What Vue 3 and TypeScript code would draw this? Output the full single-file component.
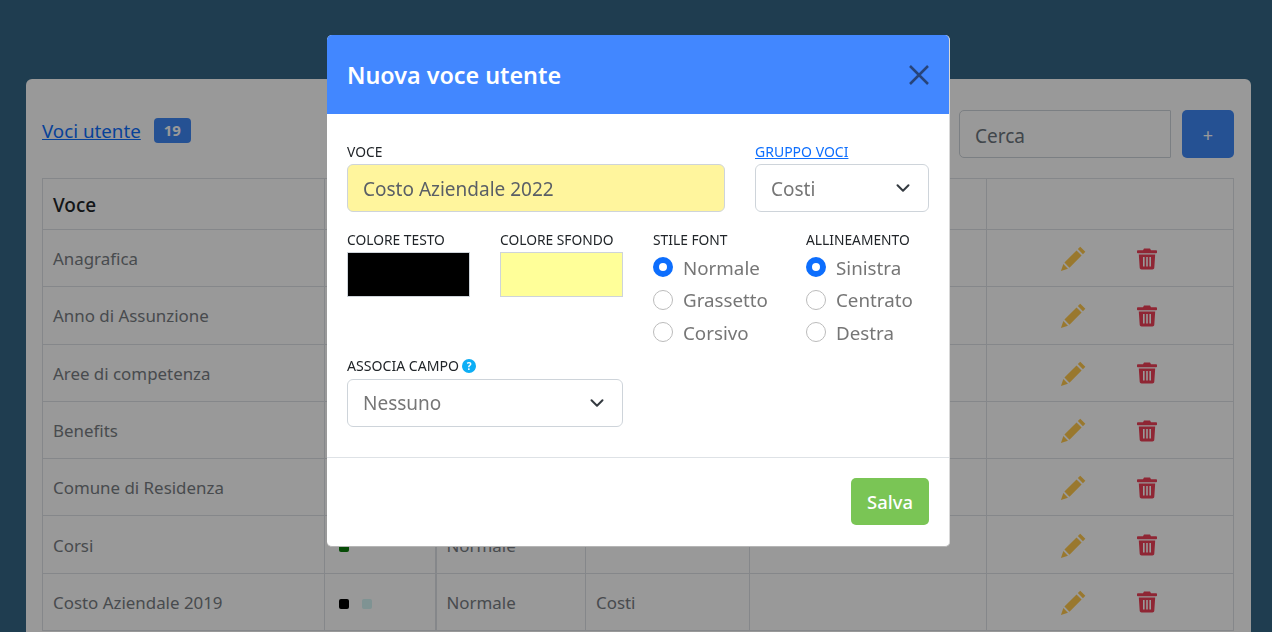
<script setup lang="ts">
interface Row { name: string; c1: string; c2: string; style: string; group: string }
const rows: Row[] = [
  { name: 'Anagrafica', c1: '#000000', c2: '#ffffff', style: '', group: '' },
  { name: 'Anno di Assunzione', c1: '#000000', c2: '#ffffff', style: '', group: '' },
  { name: 'Aree di competenza', c1: '#000000', c2: '#ffffff', style: '', group: '' },
  { name: 'Benefits', c1: '#000000', c2: '#ffffff', style: '', group: '' },
  { name: 'Comune di Residenza', c1: '#000000', c2: '#ffffff', style: '', group: '' },
  { name: 'Corsi', c1: '#0a7d0a', c2: '#ffffff', style: 'Normale', group: '' },
  { name: 'Costo Aziendale 2019', c1: '#000000', c2: '#d4f5f5', style: 'Normale', group: 'Costi' },
]
const stili = ['Normale', 'Grassetto', 'Corsivo']
const allineamenti = ['Sinistra', 'Centrato', 'Destra']
</script>

<template>
  <div class="page">
    <section class="card">
      <div class="toolbar">
        <a class="title-link" href="#">Voci utente</a>
        <span class="badge">19</span>
        <div class="spacer"></div>
        <input class="search" placeholder="Cerca" />
        <button class="add">+</button>
      </div>
      <table class="grid">
        <colgroup>
          <col style="width: 282px" /><col style="width: 111px" /><col style="width: 150px" />
          <col style="width: 164px" /><col style="width: 237px" /><col style="width: 247px" />
        </colgroup>
        <thead>
          <tr><th>Voce</th><th></th><th></th><th></th><th></th><th></th></tr>
        </thead>
        <tbody>
          <tr v-for="r in rows" :key="r.name">
            <td>{{ r.name }}</td>
            <td class="swatches">
              <span class="sw" :style="{ background: r.c1 }"></span>
              <span class="sw" :style="{ background: r.c2 }"></span>
            </td>
            <td class="thick">{{ r.style }}</td>
            <td>{{ r.group }}</td>
            <td></td>
            <td>
              <div class="actions">
                <svg class="ico" width="29" height="29" viewBox="0 0 24 24" fill="#ffc94d">
                  <path d="M17.600 2.200l4.200 4.200-2 2-4.200-4.200zM14.500 5.300l4.200 4.200L8.700 19.600l-4.200-4.200zM3.600 16.600l3.800 3.800L1.600 22.400z" />
                </svg>
                <svg class="ico" width="24" height="24" viewBox="0 0 24 24" fill="#ef4058">
                  <path fill-rule="evenodd" d="M9 1.600h6l1 1.600h5.200c.5 0 .8.4.8.8v1.400c0 .4-.3.8-.8.8H2.800c-.5 0-.8-.4-.8-.8V4c0-.4.3-.8.8-.8H8zM3.800 7.400h16.400l-.9 13.400c-.1 1-.9 1.700-1.900 1.700H6.600c-1 0-1.800-.7-1.900-1.700zM8 10v9.400h1.600V10zm3.200 0v9.400h1.600V10zm3.200 0v9.400H16V10z" />
                </svg>
              </div>
            </td>
          </tr>
        </tbody>
      </table>
    </section>
  </div>

  <div class="scrim"></div>

  <div class="modal">
    <header class="m-head">
      <h2>Nuova voce utente</h2>
      <svg class="close" width="20" height="20" viewBox="0 0 20 20" fill="none" stroke="#27447a" stroke-width="2.500">
        <path d="M1 1l18 18M19 1L1 19" />
      </svg>
    </header>
    <div class="m-body">
      <div class="row-voce">
        <div class="field">
          <label>VOCE</label>
          <input class="ctl filled" value="Costo Aziendale 2022" />
        </div>
        <div class="field">
          <a class="lab-link" href="#">GRUPPO VOCI</a>
          <div class="ctl select">
            <span>Costi</span>
            <svg width="16" height="16" viewBox="0 0 16 16" fill="none" stroke="#343a40" stroke-width="2" stroke-linecap="round" stroke-linejoin="round"><path d="M2.500 5.200L8 10.700l5.500-5.500" /></svg>
          </div>
        </div>
      </div>
      <div class="row-four">
        <div class="field">
          <label>COLORE TESTO</label>
          <div class="color" style="background: #000000"></div>
        </div>
        <div class="field">
          <label>COLORE SFONDO</label>
          <div class="color" style="background: #ffff99"></div>
        </div>
        <div class="field">
          <label>STILE FONT</label>
          <div class="radios">
            <div v-for="(s, i) in stili" :key="s" class="radio">
              <span class="dot" :class="{ on: i === 0 }"></span><span>{{ s }}</span>
            </div>
          </div>
        </div>
        <div class="field">
          <label>ALLINEAMENTO</label>
          <div class="radios">
            <div v-for="(s, i) in allineamenti" :key="s" class="radio">
              <span class="dot" :class="{ on: i === 0 }"></span><span>{{ s }}</span>
            </div>
          </div>
        </div>
      </div>
      <div class="row-assoc">
        <div class="field">
          <div class="with-help"><label>ASSOCIA CAMPO</label><span class="help">?</span></div>
          <div class="ctl select">
            <span>Nessuno</span>
            <svg width="16" height="16" viewBox="0 0 16 16" fill="none" stroke="#343a40" stroke-width="2" stroke-linecap="round" stroke-linejoin="round"><path d="M2.500 5.200L8 10.700l5.500-5.500" /></svg>
          </div>
        </div>
      </div>
    </div>
    <footer class="m-foot">
      <button class="save">Salva</button>
    </footer>
  </div>
</template>

<style>
html, body { margin: 0; height: 100%; overflow: hidden; background: #356685; }
</style>

<style scoped>
* { box-sizing: border-box; }
.page {
  padding: 79px 21px 0 26px;
  font-family: "Noto Sans", sans-serif;
  color: #212529;
  height: 632px;
  overflow: hidden;
}
.card {
  background: #fff;
  border-radius: 6px;
  padding: 31px 17px 0 16px;
  height: 700px;
}
.toolbar { display: flex; align-items: center; height: 48px; margin-bottom: 20px; }
.title-link { color: #0d6efd; font-size: 18.750px; margin-bottom: 8px; }
.badge {
  margin-left: 13px;
  margin-bottom: 7px;
  width: 37px;
  text-align: center;
  background: #3f87f5;
  color: #fff;
  font-size: 15px;
  font-weight: 700;
  border-radius: 4px;
  line-height: 24.500px;
}
.spacer { flex: 1; }
.search {
  width: 212px; height: 48px;
  border: 1px solid #ced4da; border-radius: 5px 1px 1px 5px;
  padding: 3px 15px 0; font: 19px "Noto Sans", sans-serif;
  background: #fff;
}
.search::placeholder { color: #6c757d; opacity: 1; }
.add {
  margin-left: 11px; width: 52px; height: 48px;
  background: #3f87f5; color: #fff; border: 0; border-radius: 5px;
  font: 18px "Noto Sans", sans-serif; padding-top: 2px;
}
.grid { border-collapse: collapse; table-layout: fixed; width: 1191px; }
.grid th, .grid td { border: 1px solid #dee2e6; padding: 0 10px; text-align: left; }
.grid th { height: 51px; font-size: 19px; font-weight: 500; color: #212529; padding-top: 2px; }
.grid td { height: 57.300px; color: #787d83; font-size: 16.900px; padding-top: 1px; }
.thick { border-left-width: 2px !important; }
.swatches { padding-left: 14px !important; }
.sw { display: inline-block; width: 10px; height: 10px; border-radius: 2px; margin-right: 13px; }
.actions { display: flex; align-items: center; justify-content: flex-start; gap: 47px; padding-left: 62px; }
.ico { display: block; }
.scrim { position: fixed; inset: 0; background: rgba(0, 0, 0, 0.4); }
.modal {
  position: fixed; left: 327px; top: 35px; width: 623px; height: 512px;
  background: #fff;
  border-right: 1px solid #d8d8d8; border-bottom: 1px solid #b5b5b5;
  border-radius: 5px;
  overflow: hidden;
  font-family: "Noto Sans", sans-serif;
  display: flex; flex-direction: column;
}
.m-head {
  height: 79px; flex: none; background: #4287ff;
  display: flex; align-items: center; justify-content: space-between;
  padding: 0 20px;
}
.m-head h2 { margin: 0; font-size: 23.300px; font-weight: 600; color: #fff; }
.close { display: block; }
.m-body { flex: 1; padding: 28px 20px 0; }
.field { display: flex; flex-direction: column; min-width: 0; }
label, .lab-link {
  font-size: 13.800px; line-height: 20px; color: #212529; height: 22px; white-space: nowrap;
}
.lab-link { color: #0d6efd; text-decoration: underline; font-size: 14px; }
.with-help { display: flex; align-items: flex-start; gap: 3px; height: 23px; }
.with-help label { font-size: 14.100px; height: 20px; }
.row-voce { display: grid; grid-template-columns: 378px 174px; column-gap: 30px; }
.ctl {
  height: 48px; border: 1px solid #ced4da; border-radius: 6px; background: #fff;
  font: 19px "Noto Sans", sans-serif; color: #767676;
  padding: 1px 15px 0; width: 100%;
}
.filled { background: #fff59d; color: #5a5f66; }
.select { display: flex; align-items: center; justify-content: space-between; padding-right: 17px; }
.select svg { margin-top: -1px; }
.row-four { display: grid; grid-template-columns: repeat(4, 123px); column-gap: 30px; margin-top: 18px; }
.color { height: 45px; border: 1px solid #ced4da; }
.radios { margin-top: -1px; }
.radio {
  display: flex; align-items: center; height: 32.500px;
  font-size: 18.750px; color: #767676; white-space: nowrap;
}
.dot {
  width: 20px; height: 20px; border-radius: 50%; border: 1px solid #bbbbbb;
  margin-right: 10px; flex: none;
}
.dot.on { border: 6px solid #0d6efd; }
.row-assoc { width: 276px; margin-top: 7px; }
.help {
  display: flex; align-items: center; justify-content: center; flex: none;
  width: 14px; height: 14px; margin-top: 3px; border-radius: 50%; background: #0daef5; color: #fff;
  font-size: 10px; font-weight: 700; line-height: 14px;
}
.m-foot {
  height: 89px; flex: none; border-top: 1px solid #dee2e6;
  display: flex; align-items: flex-start; justify-content: flex-end;
  padding: 20px 20px 0;
}
.save {
  width: 78px; height: 47px; border: 0; border-radius: 5px;
  background: #7ac555; color: #fff; font: 500 18.400px "Noto Sans", sans-serif;
}
</style>
